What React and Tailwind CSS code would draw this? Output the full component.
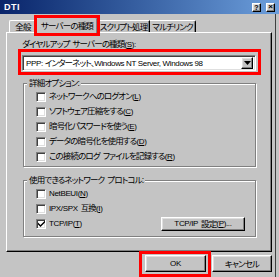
import React from "react";

const font = "font-['Liberation_Sans','Noto_Sans_CJK_JP',sans-serif] [font-feature-settings:'palt'] tracking-[-0.85px]";

// latin runs: a little smaller, near-normal spacing
const L = ({ children }) => <span className="text-[8px] tracking-[-0.35px]">{children}</span>;
const Sp = () => <span className="inline-block w-[3px]" />;

const CheckBox = ({ checked }) => (
  <span className="w-[10px] h-[10px] shrink-0 bg-white border border-t-[#808080] border-l-[#808080] border-b-white border-r-white shadow-[inset_1px_1px_0_#404040,inset_-1px_-1px_0_#dfdfdf] flex items-center justify-center">
    {checked && (
      <svg width="7" height="7" viewBox="0 0 7 7">
        <path d="M0 2.5 L2.5 5 L7 0.5 L7 2.5 L2.5 7 L0 4.5 Z" fill="#000" />
      </svg>
    )}
  </span>
);

const Row = ({ checked, children, right }) => (
  <div className="h-[15px] flex items-center gap-[3px]">
    <CheckBox checked={checked} />
    <span className="leading-[10px] whitespace-nowrap">{children}</span>
    {right}
  </div>
);

const Group = ({ title, className, children }) => (
  <div
    className={`relative ml-px w-[233px] border border-[#808080] shadow-[1px_1px_0_#fff,inset_1px_1px_0_#fff] pl-[12px] ${className}`}
  >
    <span className="absolute left-[3px] -top-[6px] px-[2px] bg-[#c4c4c4] leading-[10px] whitespace-nowrap">
      {title}
    </span>
    {children}
  </div>
);

const raised =
  "bg-[#c4c4c4] border border-t-white border-l-white border-b-black border-r-black shadow-[inset_-1px_-1px_0_#808080,inset_1px_1px_0_#dfdfdf]";

export default function App() {
  return (
    <div className={`w-[279px] h-[277px] bg-[#c4c4c4] flex flex-col overflow-hidden text-[8.5px] text-black ${font}`}>
      {/* title bar */}
      <div className="h-[14px] shrink-0 flex items-center pl-[4px] pr-[4px] bg-linear-to-r from-[#0a246a] to-[#6d9fdc]">
        <span className="text-white font-bold text-[9px] leading-none tracking-[0.5px]">DTI</span>
        <div className="ml-auto flex gap-[5px]">
          <span className={`w-[9px] h-[9px] ${raised} flex items-center justify-center text-[7px] font-bold leading-none tracking-normal`}>?</span>
          <span className={`w-[9px] h-[9px] ${raised} flex items-center justify-center text-[8px] font-bold leading-none tracking-normal`}>×</span>
        </div>
      </div>

      <div className="flex flex-1">
        <div className="w-[275px] flex flex-col">
          {/* tabs */}
          <div className="h-[18px] flex items-end pl-[9px]">
            <div className="w-[27px] h-[12px] border-l border-t border-white rounded-tl-[2px] flex items-center justify-center leading-[10px] whitespace-nowrap">
              全般
            </div>
            <div className="relative z-10 -mb-px w-[62px] h-[16px] bg-[#c4c4c4] border-l border-t border-r border-l-white border-t-white border-r-black rounded-t-[2px] shadow-[inset_-1px_0_0_#808080] flex items-center justify-center leading-[10px] whitespace-nowrap">
              サーバーの種類
              <span className="absolute -left-[3px] -right-[3px] -top-[3px] -bottom-[3px] border-[3px] border-[#f00]" />
            </div>
            <div className="w-[52px] h-[12px] border-t border-r border-t-white border-r-black shadow-[inset_-1px_0_0_#808080] flex items-center justify-center leading-[10px] whitespace-nowrap">
              スクリプト処理
            </div>
            <div className="w-[46px] h-[12px] border-t border-r border-t-white border-r-black rounded-tr-[2px] shadow-[inset_-1px_0_0_#808080] flex items-center justify-center leading-[10px] whitespace-nowrap">
              マルチリンク
            </div>
          </div>

          {/* panel */}
          <div className="ml-[6px] w-[266px] h-[220px] border border-t-white border-l-white border-r-black border-b-black shadow-[inset_-1px_-1px_0_#808080] pl-[15px] pt-[6px] flex flex-col">
            <div className="h-[10px] leading-[10px] whitespace-nowrap">
              ダイヤルアップ<Sp />サーバーの種類<L>(<u>S</u>):</L>
            </div>

            <div className="relative mt-[6px] w-[234px] h-[16px] bg-white border border-t-[#808080] border-l-[#808080] border-b-white border-r-white shadow-[inset_1px_1px_0_#404040,inset_-1px_-1px_0_#dfdfdf] flex items-center pl-[3px] pr-[2px]">
              <span className="leading-[10px] whitespace-nowrap">
                <L>PPP: </L>インターネット、<L>Windows NT Server, Windows 98</L>
              </span>
              <span className={`ml-auto w-[12px] h-[12px] ${raised} flex items-center justify-center`}>
                <svg width="7" height="4" viewBox="0 0 7 4">
                  <path d="M0 0 H7 L3.5 4 Z" fill="#000" />
                </svg>
              </span>
              <span className="absolute -left-[5px] -right-[6px] -top-[7px] -bottom-[5px] border-[3px] border-[#f00]" />
            </div>

            <Group title="詳細オプション:" className="mt-[12px] h-[84px] pt-[5px]">
              <Row>ネットワークへのログオン<L>(<u>L</u>)</L></Row>
              <Row>ソフトウェア圧縮をする<L>(<u>C</u>)</L></Row>
              <Row>暗号化パスワードを使う<L>(<u>E</u>)</L></Row>
              <Row>データの暗号化を使用する<L>(<u>D</u>)</L></Row>
              <Row>この接続のログ<Sp />ファイルを記録する<L>(<u>R</u>)</L></Row>
            </Group>

            <Group title={<>使用できるネットワーク<Sp />プロトコル:</>} className="mt-[13px] h-[57px] pt-[5px]">
              <Row><L>NetBEUI(<u>N</u>)</L></Row>
              <Row><L>IPX/SPX</L><Sp />互換<L>(<u>I</u>)</L></Row>
              <Row
                checked
                right={
                  <span className={`ml-auto mr-[10px] w-[84px] h-[14px] ${raised} flex items-center justify-center leading-[10px] whitespace-nowrap`}>
                    <L>TCP/IP</L><Sp />設定<L>(<u>P</u>)...</L>
                  </span>
                }
              >
                <L>TCP/IP(<u>T</u>)</L>
              </Row>
            </Group>
          </div>

          {/* buttons */}
          <div className="flex justify-end gap-[6px] pr-[3px] pt-[3px]">
            <div className={`relative w-[61px] h-[17px] ${raised} flex items-center justify-center leading-[10px]`}>
              <L>OK</L>
              <span className="absolute -left-[7px] -right-[6px] -top-[5px] -bottom-[6px] border-[3px] border-[#f00]" />
            </div>
            <div className={`w-[60px] h-[17px] ${raised} flex items-center justify-center leading-[10px]`}>
              キャンセル
            </div>
          </div>
        </div>
        <div className="w-px bg-[#404040]" />
        <div className="flex-1" />
      </div>
    </div>
  );
}
